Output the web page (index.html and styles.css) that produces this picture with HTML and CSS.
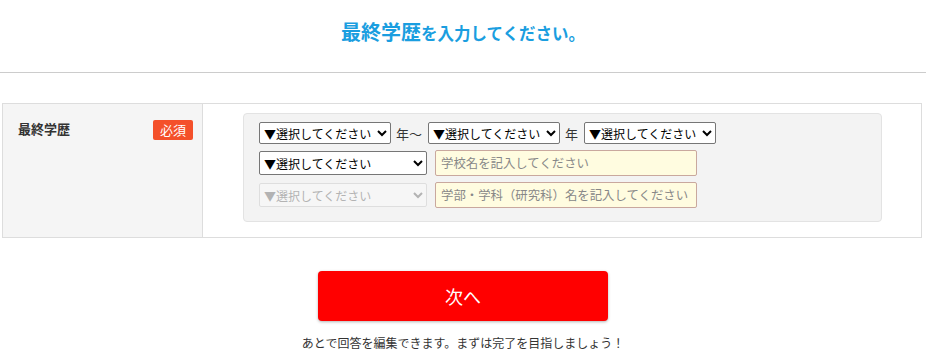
FILE: index.html
```html
<!DOCTYPE html>
<html lang="ja">
<head>
  <meta charset="UTF-8" />
  <meta name="viewport" content="width=device-width, initial-scale=1.0" />
  <title>最終学歴</title>
  <link rel="stylesheet" href="styles.css">
</head>
<body>
  <header class="page-head">
    <h1 class="page-title"><span class="title-main">最終学歴</span>を入力してください。</h1>
  </header>

  <div class="form-wrap">
    <table class="form-table">
      <tr>
        <th>
          <div class="label-row">
            <span class="label-text">最終学歴</span>
            <span class="badge">必須</span>
          </div>
        </th>
        <td>
          <div class="field-box">
            <div class="field-row">
              <select class="sel-short">
                <option>▼選択してください</option>
              </select>
              <span class="unit">年〜</span>
              <select class="sel-short">
                <option>▼選択してください</option>
              </select>
              <span class="unit">年</span>
              <select class="sel-short">
                <option>▼選択してください</option>
              </select>
            </div>
            <div class="field-row">
              <select class="sel-long">
                <option>▼選択してください</option>
              </select>
              <input type="text" class="text-input" placeholder="学校名を記入してください" />
            </div>
            <div class="field-row">
              <select class="sel-long" disabled>
                <option>▼選択してください</option>
              </select>
              <input type="text" class="text-input" placeholder="学部・学科（研究科）名を記入してください" />
            </div>
          </div>
        </td>
      </tr>
    </table>
  </div>

  <div class="actions">
    <button class="next-btn">次へ</button>
    <p class="note">あとで回答を編集できます。まずは完了を目指しましょう！</p>
  </div>
</body>
</html>
```

FILE: styles.css
```css
* {
  box-sizing: border-box;
  margin: 0;
  padding: 0;
}

body {
  font-family: "Noto Sans CJK JP", "Noto Sans", sans-serif;
  color: #333;
  background: #fff;
  width: 926px;
}

.page-head {
  height: 73px;
  border-bottom: 1px solid #cccccc;
  display: flex;
  justify-content: center;
  align-items: center;
}

.page-title {
  color: #1a9ee0;
  font-size: 16.5px;
  font-weight: bold;
  line-height: 1;
  margin-top: -8px;
}

.title-main {
  font-size: 20px;
}

.form-wrap {
  margin: 30px 4px 0 2px;
}

.form-table {
  width: 920px;
  border-collapse: collapse;
  border: 1px solid #dddddd;
}

.form-table th {
  width: 200px;
  background: #f5f5f5;
  border-right: 1px solid #dddddd;
  vertical-align: top;
  text-align: left;
  padding: 15px 9px 0 15px;
}

.label-row {
  display: flex;
  justify-content: space-between;
  align-items: flex-start;
}

.label-text {
  font-size: 13px;
  font-weight: bold;
  color: #333;
}

.badge {
  background: #f4502a;
  color: #fff;
  font-size: 13px;
  font-weight: normal;
  border-radius: 2px;
  width: 40px;
  height: 20px;
  line-height: 20px;
  text-align: center;
  margin-top: 1px;
}

.form-table td {
  padding: 9px 39px 15px 40px;
}

.field-box {
  background: #f3f3f3;
  border: 1px solid #e3e3e3;
  border-radius: 4px;
  padding: 8px 15px 13px 15px;
  display: flex;
  flex-direction: column;
  gap: 6px;
}

.field-row {
  display: flex;
  align-items: center;
}

select {
  font-family: "Noto Sans CJK JP", sans-serif;
  font-size: 12px;
  color: #000;
  height: 22px;
  border: 1px solid #767676;
  border-radius: 2px;
  background: #fff;
}

.sel-short {
  width: 132px;
}

.sel-long {
  width: 168px;
  height: 24px;
}

select:disabled {
  color: #999;
  border-color: #d6d6d6;
  background: #f8f8f8;
}

.unit {
  font-size: 13px;
  color: #333;
  margin: 0 6px 0 5px;
}

.text-input {
  width: 262px;
  height: 26px;
  margin-left: 8px;
  background: #fffce0;
  border: 1px solid #c9a89e;
  border-radius: 2px;
  padding: 0 5px;
  font-family: "Noto Sans CJK JP", sans-serif;
  font-size: 12.4px;
}

.text-input::placeholder {
  color: #888;
}

.actions {
  display: flex;
  flex-direction: column;
  align-items: center;
  margin-top: 33px;
}

.next-btn {
  width: 290px;
  height: 50px;
  background: #ff0000;
  color: #fff;
  border: none;
  border-radius: 4px;
  font-family: "Noto Sans CJK JP", sans-serif;
  font-size: 18px;
  box-shadow: 0 1px 3px rgba(0, 0, 0, 0.3);
  cursor: pointer;
}

.note {
  font-size: 12px;
  color: #333;
  margin-top: 13px;
}
```
